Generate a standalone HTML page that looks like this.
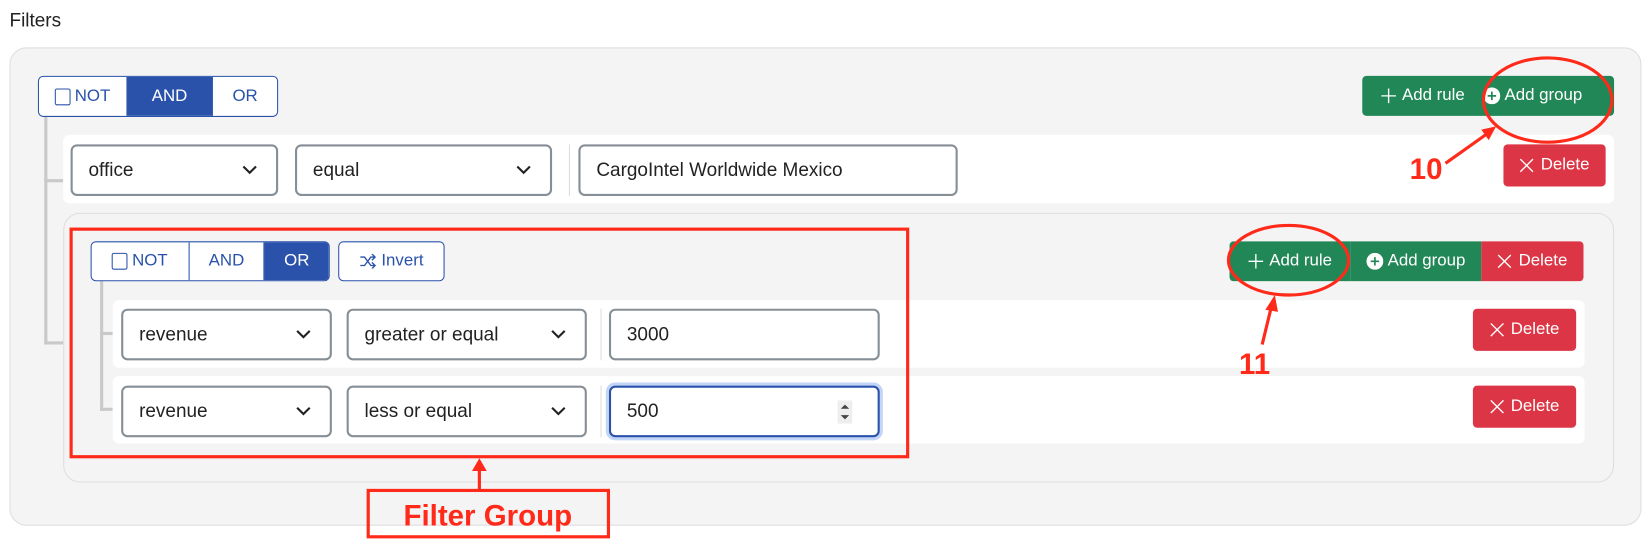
<!DOCTYPE html>
<html><head><style>
*{box-sizing:border-box;margin:0;padding:0}
body{width:1652px;height:552px;background:#fff;font-family:"Liberation Sans",Arial,sans-serif;position:relative;overflow:hidden}
#w{position:absolute;left:0;top:0;width:1568px;height:524px;transform:scale(1.05357);transform-origin:0 0}
.a{position:absolute}
.grp{position:absolute;background:#f4f4f4;border:1px solid #dedede;border-radius:16px}
.row{position:absolute;background:#fff;border-radius:6px}
.sel{position:absolute;border:2px solid #868e96;border-radius:6px;background:#fff;font-size:18px;color:#222;padding-left:15px;display:flex;align-items:center}
.sel svg{position:absolute;right:18px;top:50%;margin-top:-5px}
.tg{position:absolute;display:flex;border:1px solid #2a52ab;border-radius:5px;overflow:hidden;background:#fff}
.tg div{display:flex;align-items:center;justify-content:center;color:#2a52ab;font-size:16px;border-right:1px solid #2a52ab}
.tg div:last-child{border-right:none}
.tg .on{background:#2a52ab;color:#fff}
.cb{display:inline-block;width:15px;height:16px;border:1.5px solid #2a52ab;border-radius:2px;margin-right:4px}
.btn{position:absolute;display:flex;align-items:center;justify-content:center;color:#fff;font-size:16px}
.btn span{display:flex;align-items:center;justify-content:center}
.g{background:#218756}.r{background:#dc3545}
.sep{position:absolute;width:1px;background:#ddd}
.ln{position:absolute;background:#c9c9c9}
</style></head><body><div id="w">
<div class="a" style="left:9px;top:9px;font-size:18px;color:#222">Filters</div>
<div class="grp" style="left:9px;top:45px;width:1549px;height:454px"></div>

<div class="ln" style="left:42px;top:110px;width:3px;height:217px"></div>
<div class="ln" style="left:42px;top:170px;width:18px;height:3px"></div>
<div class="ln" style="left:42px;top:324px;width:18px;height:3px"></div>

<div class="tg" style="left:36px;top:72px;width:228px;height:39px">
<div style="width:84px"><span class="cb"></span>NOT</div><div class="on" style="width:82px">AND</div><div style="width:61px">OR</div></div>

<div class="btn g" style="left:1293px;top:72px;width:239px;height:38px;border-radius:4px;justify-content:flex-start">
<span style="width:115px"><svg width="14" height="14" style="margin-right:6px"><path d="M7 0v14M0 7h14" stroke="#fff" stroke-width="1.3"/></svg>Add rule</span><span><svg width="16" height="16" style="margin-right:4px"><circle cx="8" cy="8" r="8" fill="#fff"/><path d="M8 4v8M4 8h8" stroke="#218756" stroke-width="1.6"/></svg>Add group</span></div>

<div class="row" style="left:60px;top:128px;width:1472px;height:65px"></div>
<div class="sel" style="left:67px;top:137px;width:197px;height:49px">office<svg width="14" height="9"><path d="M1 1l6 6 6-6" stroke="#222" stroke-width="2" fill="none"/></svg></div>
<div class="sel" style="left:280px;top:137px;width:244px;height:49px">equal<svg width="14" height="9"><path d="M1 1l6 6 6-6" stroke="#222" stroke-width="2" fill="none"/></svg></div>
<div class="sep" style="left:540px;top:137px;height:49px"></div>
<div class="sel" style="left:549px;top:137px;width:360px;height:49px">CargoIntel Worldwide Mexico</div>
<div class="btn r" style="left:1427px;top:137px;width:97px;height:40px;border-radius:4px"><svg width="14" height="14" style="margin-right:6px"><path d="M1 1l12 12M13 1L1 13" stroke="#fff" stroke-width="1.3"/></svg>Delete</div>

<div class="grp" style="left:60px;top:202px;width:1472px;height:256px"></div>
<div class="ln" style="left:95px;top:266px;width:3px;height:124px"></div>
<div class="ln" style="left:95px;top:315px;width:12px;height:3px"></div>
<div class="ln" style="left:95px;top:387px;width:12px;height:3px"></div>

<div class="tg" style="left:86px;top:229px;width:227px;height:38px">
<div style="width:93px"><span class="cb"></span>NOT</div><div style="width:72px">AND</div><div class="on" style="width:61px">OR</div></div>
<div class="tg" style="left:321px;top:229px;width:101px;height:38px"><div style="width:100px"><svg width="16" height="14" style="margin-right:5px"><path d="M1 3h4l6 8h4M1 11h4l6-8h4M12 0l3 3-3 3M12 8l3 3-3 3" stroke="#2a52ab" stroke-width="1.3" fill="none"/></svg>Invert</div></div>

<div class="btn" style="left:1167px;top:229px;width:336px;height:38px;border-radius:4px;overflow:hidden;justify-content:flex-start">
<span class="g" style="width:115px;height:38px"><svg width="14" height="14" style="margin-right:6px"><path d="M7 0v14M0 7h14" stroke="#fff" stroke-width="1.3"/></svg>Add rule</span>
<span class="g" style="width:124px;height:38px"><svg width="16" height="16" style="margin-right:4px"><circle cx="8" cy="8" r="8" fill="#fff"/><path d="M8 4v8M4 8h8" stroke="#218756" stroke-width="1.6"/></svg>Add group</span>
<span class="r" style="width:97px;height:38px"><svg width="14" height="14" style="margin-right:6px"><path d="M1 1l12 12M13 1L1 13" stroke="#fff" stroke-width="1.3"/></svg>Delete</span></div>

<div class="row" style="left:107px;top:285px;width:1397px;height:64px"></div>
<div class="sel" style="left:115px;top:293px;width:200px;height:49px">revenue<svg width="14" height="9"><path d="M1 1l6 6 6-6" stroke="#222" stroke-width="2" fill="none"/></svg></div>
<div class="sel" style="left:329px;top:293px;width:228px;height:49px">greater or equal<svg width="14" height="9"><path d="M1 1l6 6 6-6" stroke="#222" stroke-width="2" fill="none"/></svg></div>
<div class="sep" style="left:570px;top:293px;height:49px"></div>
<div class="sel" style="left:578px;top:293px;width:257px;height:49px">3000</div>
<div class="btn r" style="left:1398px;top:293px;width:98px;height:40px;border-radius:4px"><svg width="14" height="14" style="margin-right:6px"><path d="M1 1l12 12M13 1L1 13" stroke="#fff" stroke-width="1.3"/></svg>Delete</div>

<div class="row" style="left:107px;top:357px;width:1397px;height:64px"></div>
<div class="sel" style="left:115px;top:366px;width:200px;height:49px">revenue<svg width="14" height="9"><path d="M1 1l6 6 6-6" stroke="#222" stroke-width="2" fill="none"/></svg></div>
<div class="sel" style="left:329px;top:366px;width:228px;height:49px">less or equal<svg width="14" height="9"><path d="M1 1l6 6 6-6" stroke="#222" stroke-width="2" fill="none"/></svg></div>
<div class="sep" style="left:570px;top:366px;height:49px"></div>
<div class="sel" style="left:578px;top:366px;width:257px;height:49px;border-color:#2a52ab;box-shadow:0 0 0 3px #c3d6f7">500<svg width="14" height="22" style="margin-top:-11px;right:24px"><rect width="14" height="22" fill="#eee"/><path d="M3 8l4-4 4 4zM3 14l4 4 4-4z" fill="#444"/></svg></div>
<div class="btn r" style="left:1398px;top:366px;width:98px;height:40px;border-radius:4px"><svg width="14" height="14" style="margin-right:6px"><path d="M1 1l12 12M13 1L1 13" stroke="#fff" stroke-width="1.3"/></svg>Delete</div>

<svg class="a" style="left:0;top:0" width="1568" height="524">
<g stroke="#ff2a1a" fill="none">
<rect x="67.5" y="217.5" width="794" height="216" stroke-width="3"/>
<rect x="349.5" y="465.5" width="228" height="44" stroke-width="3"/>
<ellipse cx="1469" cy="95" rx="61" ry="40" stroke-width="3"/>
<ellipse cx="1223" cy="247" rx="57" ry="33" stroke-width="3"/>
<path d="M455 466V445" stroke-width="3"/>
<path d="M1372 155L1410 128" stroke-width="3"/>
<path d="M1198 327L1207 290" stroke-width="3"/>
</g>
<g fill="#ff2a1a">
<path d="M455 435l-7 12h14z"/>
<path d="M1420 120l-14 3 7 10z"/>
<path d="M1210 280l-9 14 12 2z"/>
<text x="1338" y="170" font-size="28" font-weight="bold" font-family="Liberation Sans,sans-serif">10</text>
<text x="1176" y="355" font-size="28" font-weight="bold" font-family="Liberation Sans,sans-serif">11</text>
<text x="463" y="499" font-size="28" font-weight="bold" text-anchor="middle" font-family="Liberation Sans,sans-serif">Filter Group</text>
</g>
</svg>
</div></body></html>
